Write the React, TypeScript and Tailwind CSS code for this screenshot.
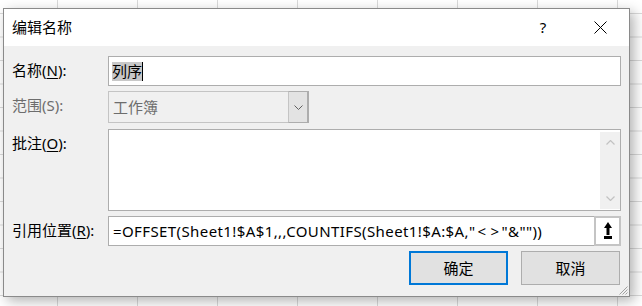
const font = "font-['Noto_Sans','Noto_Sans_CJK_SC',sans-serif]";

function Label({ children, disabled }: { children: React.ReactNode; disabled?: boolean }) {
  return (
    <div className={`w-[104px] shrink-0 pl-[8px] pt-[4px] text-[15px] leading-[20px] ${disabled ? "text-[#6d6d6d]" : "text-black"}`}>
      {children}
    </div>
  );
}

function CollapseIcon() {
  return (
    <svg width="10" height="18" viewBox="0 0 10 18">
      <path d="M5 0 L9 6 L6.5 6 L6.5 13 L3.5 13 L3.5 6 L1 6 Z" fill="#000" />
      <rect x="1" y="14" width="8" height="3" fill="#000" />
    </svg>
  );
}

export default function App() {
  return (
    <div
      className={`w-[642px] h-[306px] overflow-hidden bg-white ${font} bg-[linear-gradient(to_right,#dadada_1px,transparent_1px),linear-gradient(to_bottom,#dadada_1px,transparent_1px)] bg-[size:80px_23.5px] bg-[position:57px_13px]`}
    >
      <div className="ml-[3px] mt-[8px] w-[627px] h-[289px] border border-[#8a8a8a] bg-[#f0f0f0] shadow-[4px_4px_12px_rgba(0,0,0,0.3)] flex flex-col">
        {/* title bar */}
        <div className="h-[37px] bg-white flex items-center pl-[8px] text-[15px] text-black">
          <span className="flex-1">编辑名称</span>
          <span className="w-[12px] text-center mr-[45px]">?</span>
          <svg width="13" height="13" viewBox="0 0 13 13" className="mr-[22px]">
            <path d="M0.5 0.5 L12.5 12.5 M12.5 0.5 L0.5 12.5" stroke="#000" strokeWidth="1" />
          </svg>
        </div>

        <div className="flex-1 flex flex-col pt-[10px] pr-[8px]">
          <div className="flex h-[30px]">
            <Label>
              名称(<span className="underline underline-offset-2">N</span>):
            </Label>
            <div className="flex-1 border border-[#adadad] bg-white flex items-center pl-[3px]">
              <span className="bg-[#c8c8c8] text-[15px] leading-[19px] text-black">列序</span>
              <span className="w-px h-[19px] bg-black" />
            </div>
          </div>

          <div className="flex h-[32px] mt-[5px]">
            <Label disabled>范围(S):</Label>
            <div className="w-[201px] border border-[#c4c4c4] flex">
              <div className="flex-1 flex items-center pl-[4px] text-[15px] text-[#6d6d6d]">工作簿</div>
              <div className="w-[21px] bg-[#e3e3e3] border-l border-[#c4c4c4] border-r-2 border-r-[#adadad] border-y border-y-[#adadad] -my-px -mr-px flex items-center justify-center">
                <svg width="9" height="5" viewBox="0 0 9 5">
                  <path d="M0.5 0.5 L4.5 4.5 L8.5 0.5" stroke="#606060" fill="none" strokeWidth="1" />
                </svg>
              </div>
            </div>
          </div>

          <div className="flex h-[82px] mt-[6px]">
            <Label>
              批注(<span className="underline underline-offset-2">O</span>):
            </Label>
            <div className="flex-1 border border-[#adadad] bg-white flex justify-end pt-[2px] pb-px">
              <div className="w-[20px] bg-[#f0f0f0] flex flex-col items-center justify-between py-[8px]">
                <svg width="9" height="5" viewBox="0 0 9 5">
                  <path d="M0.5 4.5 L4.5 0.5 L8.5 4.5" stroke="#c2c2c2" fill="none" strokeWidth="1.2" />
                </svg>
                <svg width="9" height="5" viewBox="0 0 9 5">
                  <path d="M0.5 0.5 L4.5 4.5 L8.5 0.5" stroke="#c2c2c2" fill="none" strokeWidth="1.2" />
                </svg>
              </div>
            </div>
          </div>

          <div className="flex h-[30px] mt-[5px]">
            <Label>
              引用位置(<span className="underline underline-offset-2">R</span>):
            </Label>
            <div className="flex-1 border border-[#adadad] bg-white flex">
              <div className="flex-1 flex items-center pl-[4px] text-[15px] tracking-[0.4px] text-black whitespace-nowrap overflow-hidden">
                =OFFSET(Sheet1!$A$1,,,COUNTIFS(Sheet1!$A:$A,"<span className="mx-[2px]">&lt;</span><span className="mx-[2px]">&gt;</span>"&amp;""))
              </div>
              <div className="w-[27px] -my-px -mr-px border-2 border-[#c4c4c4] bg-white flex items-center justify-center">
                <CollapseIcon />
              </div>
            </div>
          </div>

          <div className="flex justify-end gap-[13px] mt-[5px] pr-px">
            <button className="w-[99px] h-[34px] border-2 border-[#0078d7] bg-[#e1e1e1] text-[15px] text-black">确定</button>
            <button className="w-[99px] h-[34px] border border-[#adadad] bg-[#e1e1e1] text-[15px] text-black">取消</button>
          </div>

          <div className="flex-1 flex justify-end items-end">
            <svg width="10" height="10" viewBox="0 0 10 10" className="-mr-[7px] mb-px">
              <path d="M9.5 1.5 L1.5 9.5 M9.5 4.5 L4.5 9.5 M9.5 7.5 L7.5 9.5" stroke="#a0a0a0" strokeWidth="1" />
            </svg>
          </div>
        </div>
      </div>
    </div>
  );
}
